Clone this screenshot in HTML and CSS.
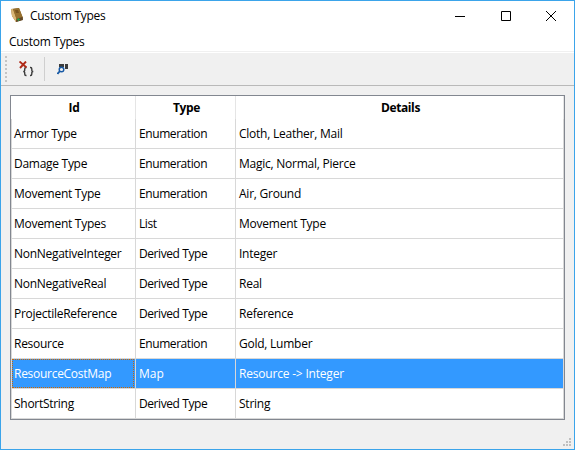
FILE: index.html
```html
<!DOCTYPE html>
<html lang="en">
<head>
<meta charset="utf-8">
<title>Custom Types</title>
<link rel="stylesheet" href="styles.css">
</head>
<body>
<div class="window">
  <header class="titlebar">
    <svg class="app-icon" width="16" height="16" viewBox="0 0 16 16">
      <path d="M2 1L10 0L14 10L13 12L7 14L3 8Z" fill="#8b6428"/>
      <path d="M2 1L4 1L7.500 11L7 14L3 8Z" fill="#d9b676"/>
      <path d="M4 1L10 0L13.500 9L7.500 11Z" fill="#96702f"/>
      <path d="M6 2L9 2L10 5L7 5Z" fill="#75521f"/>
      <path d="M7.500 11L13.500 9L14 12L7 14Z" fill="#604728"/>
      <path d="M9 10h1v1h1v1h-1v1h-1v-1h-1v-1h1z" fill="#259847"/>
    </svg>
    <h1 class="title">Custom Types</h1>
    <div class="controls">
      <svg width="10" height="10" viewBox="0 0 10 10"><path d="M0 5.5H10" stroke="#000"/></svg>
      <svg width="10" height="10" viewBox="0 0 10 10"><path d="M.5.5h9v9h-9z" fill="none" stroke="#000"/></svg>
      <svg width="10" height="10" viewBox="0 0 10 10"><path d="M0 0L10 10M10 0L0 10" stroke="#000"/></svg>
    </div>
  </header>
  <nav class="menubar"><span>Custom Types</span></nav>
  <div class="toolbar">
    <div class="grip"></div>
    <svg class="tool" width="16" height="16" viewBox="0 0 16 16">
      <path d="M7.500 6.500H7Q5.700 6.500 5.700 8V9.500Q5.700 10.500 4.200 10.500Q5.700 10.500 5.700 11.500V13Q5.700 14.500 7 14.500H7.500M11 6.500H11.500Q12.800 6.500 12.800 8V9.500Q12.800 10.500 14.300 10.500Q12.800 10.500 12.800 11.500V13Q12.800 14.500 11.500 14.500H11" fill="none" stroke="#3c3c3c" stroke-width="1.400"/>
      <path d="M.5 .5L7.500 6.500M7 .5L1 7" fill="none" stroke="#b02a18" stroke-width="1.900"/>
    </svg>
    <div class="separator"></div>
    <svg class="tool" width="16" height="16" viewBox="0 0 16 16">
      <path d="M2 3h5v3H2zM8 3h3v5H8z" fill="#3c3c3c"/>
      <circle cx="4.500" cy="8.500" r="2.300" fill="#f0f0f0" stroke="#1659a5" stroke-width="1.400"/>
      <path d="M2.900 10.200L.5 12.800" stroke="#1659a5" stroke-width="1.700"/>
    </svg>
  </div>
  <main class="content">
    <table class="types">
      <colgroup><col class="c-id"><col class="c-type"><col class="c-details"></colgroup>
      <thead><tr><th>Id</th><th>Type</th><th>Details</th></tr></thead>
      <tbody>
        <tr><td>Armor Type</td><td>Enumeration</td><td>Cloth, Leather, Mail</td></tr>
        <tr><td>Damage Type</td><td>Enumeration</td><td>Magic, Normal, Pierce</td></tr>
        <tr><td>Movement Type</td><td>Enumeration</td><td>Air, Ground</td></tr>
        <tr><td>Movement Types</td><td>List</td><td>Movement Type</td></tr>
        <tr><td>NonNegativeInteger</td><td>Derived Type</td><td>Integer</td></tr>
        <tr><td>NonNegativeReal</td><td>Derived Type</td><td>Real</td></tr>
        <tr><td>ProjectileReference</td><td>Derived Type</td><td>Reference</td></tr>
        <tr><td>Resource</td><td>Enumeration</td><td>Gold, Lumber</td></tr>
        <tr class="selected"><td class="focus">ResourceCostMap</td><td>Map</td><td>Resource -&gt; Integer</td></tr>
        <tr><td>ShortString</td><td>Derived Type</td><td>String</td></tr>
      </tbody>
    </table>
  </main>
  <footer class="statusbar">
    <svg width="8" height="8" viewBox="0 0 8 8" fill="#bfbfbf"><path d="M6 0h2v2H6zM3 3h2v2H3zM6 3h2v2H6zM0 6h2v2H0zM3 6h2v2H3zM6 6h2v2H6z"/></svg>
  </footer>
</div>
</body>
</html>
```

FILE: styles.css
```css
* { box-sizing: border-box; }
body {
  margin: 0;
  font: 12px/16px "Open Sans", "Noto Sans", sans-serif;
  letter-spacing: -0.28px;
  color: #000;
}
.window {
  width: 575px;
  height: 450px;
  border: 1px solid #3ba4ea;
  background: #f0f0f0;
  display: flex;
  flex-direction: column;
}
.titlebar {
  height: 30px;
  flex: none;
  display: flex;
  align-items: center;
  background: #fff;
  padding-left: 8px;
}
.title { margin: 0 0 0 5px; font-size: 12px; font-weight: 400; }
.controls { margin-left: auto; display: flex; gap: 35.5px; padding-right: 18px; }
.controls svg { display: block; }
.menubar {
  height: 21px;
  flex: none;
  background: #fff;
  padding: 3px 8px 0;
  border-bottom: 1px solid #f0f0f0;
}
.toolbar {
  height: 34px;
  flex: none;
  display: flex;
  align-items: center;
  border-top: 1px solid #fff;
  border-bottom: 1px solid #b9b9b9;
}
.grip {
  width: 2px;
  height: 26px;
  margin-left: 4px;
  background: repeating-linear-gradient(#c4c4c4 0 2px, transparent 2px 4px);
}
.tool { display: block; margin-left: 12px; }
.separator { width: 1px; height: 24px; margin-left: 9px; background: #cfcfcf; }
.content { padding: 9px 9px 0; flex: 1; }
.types {
  width: 555px;
  height: 325px;
  table-layout: fixed;
  border: 1px solid #828790;
  background: #fff;
  border-spacing: 0;
}
.c-id { width: 125px; }
.c-type { width: 100px; }
th {
  height: 23px;
  padding: 0 0 0 2px;
  border-right: 1px solid #e5e5e5;
  font-weight: 700;
  letter-spacing: -0.4px;
}
td {
  height: 30px;
  padding: 0 3px;
  border-right: 1px solid #d8d8d8;
  border-bottom: 1px solid #d8d8d8;
  white-space: nowrap;
}
td:first-child { border-left: 1px solid #d8d8d8; padding-left: 2px; }
td:nth-child(2) { letter-spacing: -0.42px; }
td:nth-child(3) { letter-spacing: -0.24px; }
.selected td { background-color: #3399ff; color: #fff; }
.selected td:nth-child(2) { letter-spacing: 0; }
.selected td:nth-child(3) { letter-spacing: -0.2px; }
/* Dotted keyboard-focus rectangle around the current cell */
.selected .focus { position: relative; }
.selected .focus::after {
  content: "";
  position: absolute;
  inset: 0 1px 0 0;
  border: 1px dotted #cc6600;
}
.statusbar { height: 12px; flex: none; display: flex; justify-content: flex-end; padding: 1px 3px 0 0; }
.statusbar svg { display: block; }
```
